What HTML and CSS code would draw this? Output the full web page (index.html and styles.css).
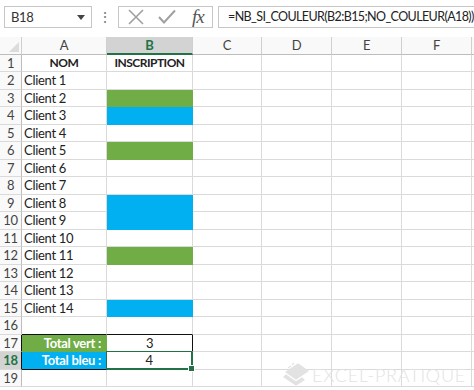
FILE: index.html
```html
<!DOCTYPE html>
<html lang="fr">
<head>
  <title>NB_SI_COULEUR</title>
  <link rel="stylesheet" href="styles.css">
</head>
<body>

<div class="toolbar">
  <div class="namebox">
    <span>B18</span>
    <svg width="8" height="5" viewBox="0 0 8 5"><path d="M0 0 H8 L4 5 Z" fill="#444"/></svg>
  </div>
  <div class="dots">&#8942;</div>
  <div class="fx-buttons">
    <svg class="cancel" width="16" height="16" viewBox="0 0 16 16"><path d="M1 1 L15 15 M15 1 L1 15" stroke="#a0a0a0" stroke-width="1.6" fill="none"/></svg>
    <svg class="enter" width="18" height="16" viewBox="0 0 18 16"><path d="M1 8 L6 13.5 L17 1.5" stroke="#a0a0a0" stroke-width="2" fill="none"/></svg>
    <span class="fx">fx</span>
  </div>
  <div class="formula">=NB_SI_COULEUR(B2:B15;NO_COULEUR(A18))</div>
</div>

<div class="sheet">
  <div class="row head">
    <div class="corner"><svg width="10" height="10" viewBox="0 0 10 10"><path d="M10 0 V10 H0 Z" fill="#dcdcdc"/></svg></div>
    <div>A</div><div class="sel">B</div><div>C</div><div>D</div><div>E</div><div>F</div><div></div>
  </div>
  <div class="row"><div class="num">1</div><div class="title center">NOM</div><div class="title center">INSCRIPTION</div><div></div><div></div><div></div><div></div><div></div></div>
  <div class="row"><div class="num">2</div><div>Client 1</div><div></div><div></div><div></div><div></div><div></div><div></div></div>
  <div class="row"><div class="num">3</div><div>Client 2</div><div class="green"></div><div></div><div></div><div></div><div></div><div></div></div>
  <div class="row"><div class="num">4</div><div>Client 3</div><div class="blue"></div><div></div><div></div><div></div><div></div><div></div></div>
  <div class="row"><div class="num">5</div><div>Client 4</div><div></div><div></div><div></div><div></div><div></div><div></div></div>
  <div class="row"><div class="num">6</div><div>Client 5</div><div class="green"></div><div></div><div></div><div></div><div></div><div></div></div>
  <div class="row"><div class="num">7</div><div>Client 6</div><div></div><div></div><div></div><div></div><div></div><div></div></div>
  <div class="row"><div class="num">8</div><div>Client 7</div><div></div><div></div><div></div><div></div><div></div><div></div></div>
  <div class="row"><div class="num">9</div><div>Client 8</div><div class="blue"></div><div></div><div></div><div></div><div></div><div></div></div>
  <div class="row"><div class="num">10</div><div>Client 9</div><div class="blue"></div><div></div><div></div><div></div><div></div><div></div></div>
  <div class="row"><div class="num">11</div><div>Client 10</div><div></div><div></div><div></div><div></div><div></div><div></div></div>
  <div class="row"><div class="num">12</div><div>Client 11</div><div class="green"></div><div></div><div></div><div></div><div></div><div></div></div>
  <div class="row"><div class="num">13</div><div>Client 12</div><div></div><div></div><div></div><div></div><div></div><div></div></div>
  <div class="row"><div class="num">14</div><div>Client 13</div><div></div><div></div><div></div><div></div><div></div><div></div></div>
  <div class="row"><div class="num">15</div><div>Client 14</div><div class="blue"></div><div></div><div></div><div></div><div></div><div></div></div>
  <div class="row"><div class="num">16</div><div class="over-black"></div><div class="over-black"></div><div></div><div></div><div></div><div></div><div></div></div>
  <div class="row"><div class="num edge">17</div><div class="total green">Total vert :</div><div class="center value black-right">3</div><div></div><div></div><div></div><div></div><div></div></div>
  <div class="row"><div class="num sel edge">18</div><div class="total blue black-bottom">Total bleu :</div><div class="center value picked">4</div><div></div><div></div><div></div><div></div><div></div></div>
  <div class="row"><div class="num">19</div><div></div><div></div><div></div><div></div><div></div><div></div><div></div></div>
</div>

<div class="watermark">
  <svg width="28" height="26" viewBox="0 0 28 26"><path d="M4 10 L16 2 L26 9 L14 17 Z M2 15 L14 23 L22 18 L20 16 L14 20 L4 13 Z M6 6 L9 4 M10 3 L12 1" fill="#e2e2e2" stroke="#e2e2e2" stroke-width="1.2"/></svg>
  <span>EXCEL-PRATIQUE</span>
</div>

</body>
</html>
```

FILE: styles.css
```css
* {
  margin: 0;
  padding: 0;
  box-sizing: border-box;
}
body {
  background-color: #ffffff;
  font-family: Lato, "Open Sans", sans-serif;
  font-size: 13px;
  letter-spacing: -0.3px;
  color: #222;
  overflow: hidden;
  position: relative;
  width: 474px;
  height: 390px;
}
.toolbar {
  display: flex;
  align-items: flex-start;
  height: 37px;
  padding: 6px 0 0 4px;
}
.namebox {
  width: 88px;
  height: 22px;
  border: 1px solid #c6c6c6;
  display: flex;
  align-items: center;
  justify-content: space-between;
  padding: 0 6px 0 6px;
  font-size: 13px;
  color: #333;
}
.dots {
  width: 26px;
  height: 22px;
  line-height: 22px;
  text-align: center;
  color: #777;
  font-size: 14px;
}
.fx-buttons {
  width: 95px;
  height: 22px;
  border: 1px solid #c6c6c6;
  display: flex;
  align-items: center;
  padding-left: 9px;
}
.fx-buttons .enter {
  margin-left: 14px;
}
.fx {
  margin-left: 16px;
  font-family: "Liberation Serif", serif;
  font-style: italic;
  font-size: 19px;
  color: #555;
  letter-spacing: -1px;
}
.formula {
  flex: 1;
  height: 22px;
  margin-left: 5px;
  border: 1px solid #c6c6c6;
  border-right: none;
  padding-left: 9px;
  line-height: 20px;
  font-size: 12.5px;
  letter-spacing: -0.6px;
  color: #222;
  white-space: nowrap;
  overflow: hidden;
}
.sheet {
  display: flex;
  flex-direction: column;
}
.row {
  display: grid;
  grid-template-columns: 22px 85px 86px 69px 70px 70px 70px 10px;
  height: 17.5px;
}
.row div {
  border-right: 1px solid #dadada;
  border-bottom: 1px solid #dadada;
  line-height: 16px;
  padding-left: 2px;
  white-space: nowrap;
  overflow: hidden;
}
.row.head div {
  background-color: #f9f9f9;
  border-right-color: #cfcfcf;
  border-bottom-color: #bdbdbd;
  text-align: center;
  color: #444;
  padding-left: 0;
}
.row.head .corner {
  display: flex;
  align-items: flex-end;
  justify-content: flex-end;
  padding: 0 2px 2px 0;
}
.row.head .sel {
  background-color: #d3d3d3;
  color: #217346;
  font-weight: bold;
  border-bottom: 2px solid #217346;
}
.row .num {
  background-color: #f9f9f9;
  border-right-color: #bdbdbd;
  border-bottom-color: #dadada;
  text-align: center;
  color: #444;
  padding-left: 0;
}
.row .num.sel {
  background-color: #d3d3d3;
  color: #217346;
  font-weight: bold;
}
.row .num.edge {
  border-right: 1px solid #111;
}
.row .title {
  font-weight: bold;
  font-size: 12px;
  letter-spacing: -0.5px;
}
.row .center {
  text-align: center;
  padding-left: 0;
}
.row .green {
  background-color: #70ad47;
  border-color: #70ad47;
}
.row .blue {
  background-color: #00b0f0;
  border-color: #00b0f0;
}
.row .total {
  color: #ffffff;
  font-weight: bold;
  text-align: right;
  padding-right: 5px;
}
.row .over-black {
  border-bottom-color: #111;
}
.row .black-right {
  border-right-color: #111;
}
.row .total.black-bottom {
  border-bottom-color: #111;
}
.row .picked {
  position: relative;
  overflow: visible;
  border-right: 2px solid #217346;
  border-bottom: 2px solid #217346;
  box-shadow: -1px -1px 0 #217346;
}
.row .picked::after {
  content: "";
  position: absolute;
  right: -4px;
  bottom: -4px;
  width: 5px;
  height: 5px;
  background-color: #217346;
  border: 1px solid #ffffff;
}
.watermark {
  position: absolute;
  left: 282px;
  top: 362px;
  display: flex;
  align-items: center;
  gap: 2px;
  color: #e2e2e2;
  font-size: 18px;
  font-weight: 300;
  letter-spacing: 0.8px;
}
```
